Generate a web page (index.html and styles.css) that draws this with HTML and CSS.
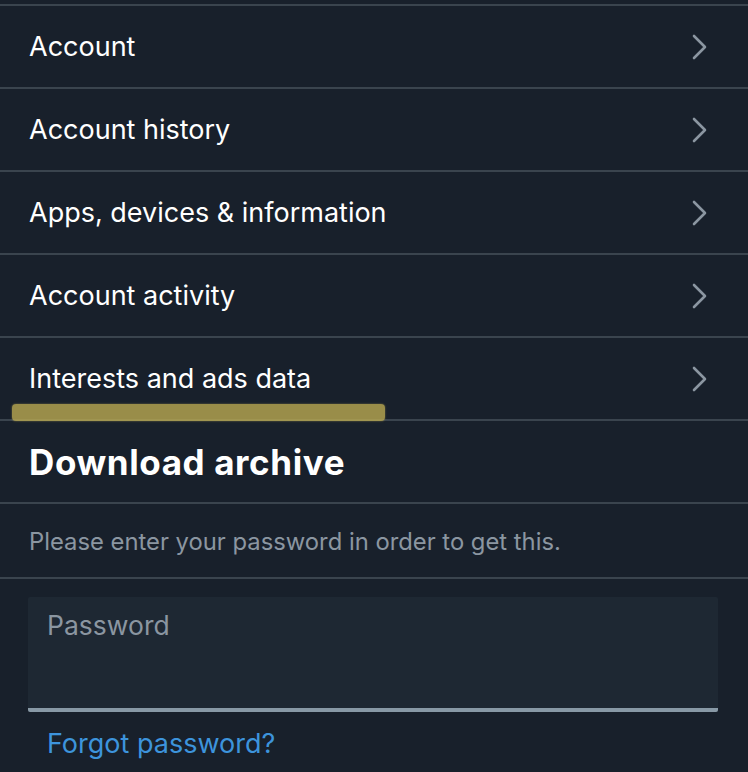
FILE: index.html
```html
<!DOCTYPE html>
<html>
<head>
<meta charset="utf-8">
<link rel="stylesheet" href="styles.css">
</head>
<body>
<div class="page">
  <div class="list">
    <div class="row"><span class="label">Account</span><svg class="chev" width="20" height="26" viewBox="0 0 20 26"><path d="M4 2 L15 13 L4 24" fill="none" stroke="#8b96a1" stroke-width="2.6" stroke-linecap="round" stroke-linejoin="round"/></svg></div>
    <div class="row"><span class="label">Account history</span><svg class="chev" width="20" height="26" viewBox="0 0 20 26"><path d="M4 2 L15 13 L4 24" fill="none" stroke="#8b96a1" stroke-width="2.6" stroke-linecap="round" stroke-linejoin="round"/></svg></div>
    <div class="row"><span class="label">Apps, devices &amp; information</span><svg class="chev" width="20" height="26" viewBox="0 0 20 26"><path d="M4 2 L15 13 L4 24" fill="none" stroke="#8b96a1" stroke-width="2.6" stroke-linecap="round" stroke-linejoin="round"/></svg></div>
    <div class="row"><span class="label">Account activity</span><svg class="chev" width="20" height="26" viewBox="0 0 20 26"><path d="M4 2 L15 13 L4 24" fill="none" stroke="#8b96a1" stroke-width="2.6" stroke-linecap="round" stroke-linejoin="round"/></svg></div>
    <div class="row hl-row"><span class="label">Interests and ads data</span><svg class="chev" width="20" height="26" viewBox="0 0 20 26"><path d="M4 2 L15 13 L4 24" fill="none" stroke="#8b96a1" stroke-width="2.6" stroke-linecap="round" stroke-linejoin="round"/></svg><span class="highlight"></span></div>
    <div class="row heading"><span class="title">Download archive</span></div>
    <div class="row note"><span class="hint">Please enter your password in order to get this.</span></div>
  </div>
  <div class="form">
    <div class="input"><span class="placeholder">Password</span></div>
    <a class="forgot">Forgot password?</a>
  </div>
</div>
</body>
</html>
```
FILE: styles.css
```css
html, body {
  margin: 0;
  padding: 0;
  background: #18202b;
}
.page {
  width: 748px;
  height: 772px;
  overflow: hidden;
  padding-top: 4px;
  box-sizing: border-box;
  font-family: "Inter", "Roboto", "Liberation Sans", sans-serif;
}
.list {
  border-top: 2px solid #3a444e;
}
.row {
  height: 81px;
  border-bottom: 2px solid #3a444e;
  display: flex;
  align-items: center;
  justify-content: space-between;
  padding: 0 38px 0 29px;
  position: relative;
}
.label {
  color: #ffffff;
  font-size: 27px;
}
.chev {
  display: block;
}
.highlight {
  position: absolute;
  left: 12px;
  top: 66px;
  width: 373px;
  height: 17px;
  border-radius: 4px;
  background: rgba(190, 172, 82, 0.78);
  box-shadow: 0 0 2px rgba(190, 172, 82, 0.6);
}
.title {
  color: #ffffff;
  font-size: 35px;
  font-weight: 700;
  letter-spacing: 0.6px;
}
.note {
  height: 73px;
}
.hint {
  color: #8b96a1;
  font-size: 23.8px;
  margin-top: 2px;
}
.form {
  padding: 18px 30px 0 28px;
}
.input {
  background: #1e2833;
  border-bottom: 4px solid #8899a6;
  border-radius: 2px;
  padding: 12px 19px 0;
  box-sizing: border-box;
  height: 115px;
}
.placeholder {
  color: #8b96a1;
  font-size: 26.5px;
}
.forgot {
  display: block;
  margin-top: 15px;
  padding-left: 19px;
  color: #3d94dc;
  font-size: 27px;
}
```
